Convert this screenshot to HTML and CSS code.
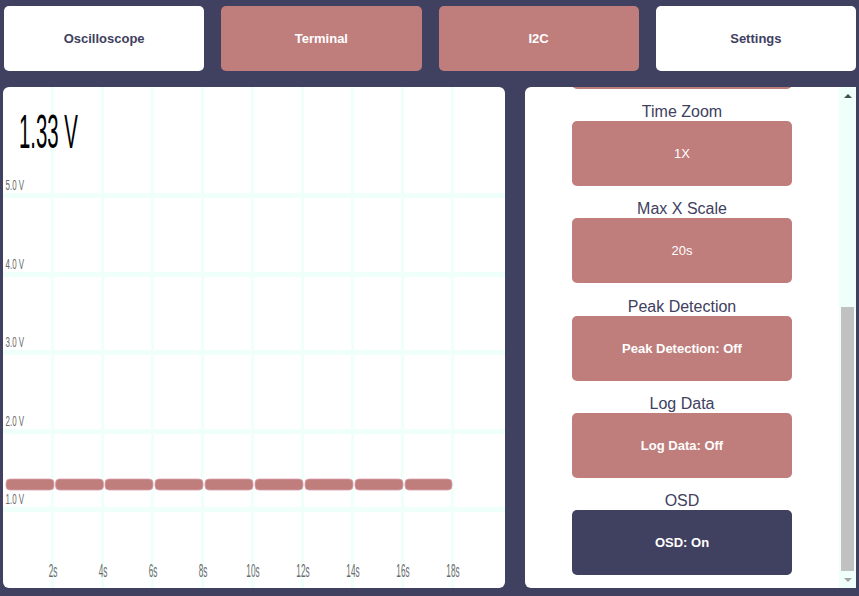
FILE: index.html
```html
<!DOCTYPE html>
<html>
<head>
<meta charset="utf-8">
<title>Oscilloscope</title>
<link rel="stylesheet" href="styles.css">
</head>
<body>
<div class="app">
  <nav class="nav">
    <button class="nav-btn light">Oscilloscope</button>
    <button class="nav-btn pink">Terminal</button>
    <button class="nav-btn pink">I2C</button>
    <button class="nav-btn light">Settings</button>
  </nav>
  <main class="main">
    <section class="chart">
      <svg class="chart-svg" width="502" height="501" viewBox="0 0 502 501">
        <g class="grid">
          <rect x="48" y="0" width="3" height="501"/>
          <rect x="98" y="0" width="3" height="501"/>
          <rect x="148" y="0" width="3" height="501"/>
          <rect x="198" y="0" width="3" height="501"/>
          <rect x="248" y="0" width="3" height="501"/>
          <rect x="298" y="0" width="3" height="501"/>
          <rect x="348" y="0" width="3" height="501"/>
          <rect x="398" y="0" width="3" height="501"/>
          <rect x="448" y="0" width="3" height="501"/>
          <rect x="0" y="106" width="502" height="5"/>
          <rect x="0" y="185" width="502" height="5"/>
          <rect x="0" y="263" width="502" height="5"/>
          <rect x="0" y="342" width="502" height="5"/>
          <rect x="0" y="420" width="502" height="5"/>
        </g>
        <g class="ylabels">
          <text transform="translate(2.5,103) scale(0.53,1)">5.0 V</text>
          <text transform="translate(2.5,181.5) scale(0.53,1)">4.0 V</text>
          <text transform="translate(2.5,260) scale(0.53,1)">3.0 V</text>
          <text transform="translate(2.5,338.5) scale(0.53,1)">2.0 V</text>
          <text transform="translate(2.5,417) scale(0.53,1)">1.0 V</text>
        </g>
        <g class="trace">
          <rect x="3" y="392" width="48" height="11" rx="4"/>
          <rect x="52.5" y="392" width="48" height="11" rx="4"/>
          <rect x="102" y="392" width="48" height="11" rx="4"/>
          <rect x="152" y="392" width="48" height="11" rx="4"/>
          <rect x="202" y="392" width="48" height="11" rx="4"/>
          <rect x="252" y="392" width="48" height="11" rx="4"/>
          <rect x="302" y="392" width="48" height="11" rx="4"/>
          <rect x="352" y="392" width="48" height="11" rx="4"/>
          <rect x="402" y="392" width="47" height="11" rx="4"/>
        </g>
        <g class="xlabels">
          <text transform="translate(50,490) scale(0.46,1)">2s</text>
          <text transform="translate(100,490) scale(0.46,1)">4s</text>
          <text transform="translate(150,490) scale(0.46,1)">6s</text>
          <text transform="translate(200,490) scale(0.46,1)">8s</text>
          <text transform="translate(250,490) scale(0.46,1)">10s</text>
          <text transform="translate(300,490) scale(0.46,1)">12s</text>
          <text transform="translate(350,490) scale(0.46,1)">14s</text>
          <text transform="translate(400,490) scale(0.46,1)">16s</text>
          <text transform="translate(450,490) scale(0.46,1)">18s</text>
        </g>
        <text class="reading" transform="translate(16,61) scale(0.425,1)">1.33 V</text>
      </svg>
    </section>
    <section class="settings">
      <div class="settings-content">
        <div class="setting">
          <div class="setting-btn pink"></div>
        </div>
        <div class="setting">
          <div class="setting-label">Time Zoom</div>
          <button class="setting-btn pink">1X</button>
        </div>
        <div class="setting">
          <div class="setting-label">Max X Scale</div>
          <button class="setting-btn pink">20s</button>
        </div>
        <div class="setting">
          <div class="setting-label">Peak Detection</div>
          <button class="setting-btn pink bold">Peak Detection: Off</button>
        </div>
        <div class="setting">
          <div class="setting-label">Log Data</div>
          <button class="setting-btn pink bold">Log Data: Off</button>
        </div>
        <div class="setting">
          <div class="setting-label">OSD</div>
          <button class="setting-btn dark bold">OSD: On</button>
        </div>
      </div>
      <div class="scrollbar">
        <div class="sb-btn"><span class="arrow-up"></span></div>
        <div class="sb-track"><div class="sb-thumb"></div></div>
        <div class="sb-btn"><span class="arrow-down"></span></div>
      </div>
    </section>
  </main>
</div>
</body>
</html>
```

FILE: styles.css
```css
* { box-sizing: border-box; }

html, body {
  margin: 0;
  padding: 0;
  background: #404060;
  font-family: "Liberation Sans", Arial, sans-serif;
}

.app {
  width: 859px;
  height: 596px;
  padding: 6px 3px 8px 3px;
  display: flex;
  flex-direction: column;
}

.nav {
  display: grid;
  grid-template-columns: repeat(4, 1fr);
  column-gap: 17px;
  padding-left: 1px;
  height: 65px;
}

.nav-btn {
  border: none;
  border-radius: 5px;
  font-family: "Liberation Sans", Arial, sans-serif;
  font-weight: bold;
  font-size: 13px;
  height: 65px;
  padding: 0;
  cursor: pointer;
}

.nav-btn.light { background: #ffffff; color: #404060; }
.nav-btn.pink { background: #bf7e7c; color: #ffffff; }

.main {
  margin-top: 16px;
  height: 501px;
  display: flex;
  column-gap: 20px;
}

.chart {
  width: 502px;
  height: 501px;
  background: #ffffff;
  border-radius: 6px;
  overflow: hidden;
}

.chart-svg { display: block; }

.grid rect { fill: #effffa; }

.trace rect {
  fill: #bf7e7c;
  stroke: #dba0ae;
  stroke-width: 0.8;
}

.ylabels text {
  font-family: "Liberation Sans", Arial, sans-serif;
  font-size: 15px;
  fill: #6a6a6a;
}

.xlabels text {
  font-family: "Liberation Sans", Arial, sans-serif;
  font-size: 18px;
  fill: #6a6a6e;
  text-anchor: middle;
}

.reading {
  font-family: "Liberation Sans", Arial, sans-serif;
  font-size: 48px;
  fill: #000000;
}

.settings {
  width: 331px;
  height: 501px;
  background: #ffffff;
  border-radius: 6px 0 0 6px;
  display: flex;
  overflow: hidden;
}

.settings-content {
  flex: 1;
  display: flex;
  flex-direction: column;
  justify-content: flex-end;
  align-items: center;
  padding-bottom: 13px;
  overflow: hidden;
  row-gap: 14.25px;
}

.setting {
  display: flex;
  flex-direction: column;
  align-items: center;
  flex-shrink: 0;
}

.setting-label {
  font-size: 16px;
  line-height: 18px;
  color: #404060;
  text-align: center;
}

.setting-btn {
  width: 220px;
  height: 65px;
  border: none;
  border-radius: 5px;
  font-family: "Liberation Sans", Arial, sans-serif;
  font-size: 13px;
  color: #ffffff;
  padding: 0;
  cursor: pointer;
}

.setting-btn.bold { font-weight: bold; }
.setting-btn.pink { background: #bf7e7c; }
.setting-btn.dark { background: #404060; }

.scrollbar {
  width: 17px;
  background: #effffa;
  display: flex;
  flex-direction: column;
}

.sb-btn {
  height: 17px;
  display: flex;
  align-items: center;
  justify-content: center;
}

.arrow-up {
  width: 0;
  height: 0;
  border-left: 4px solid transparent;
  border-right: 4px solid transparent;
  border-bottom: 4px solid #405050;
}

.arrow-down {
  width: 0;
  height: 0;
  border-left: 4px solid transparent;
  border-right: 4px solid transparent;
  border-top: 4px solid #a3a3a3;
}

.sb-track {
  flex: 1;
  display: flex;
  flex-direction: column;
  justify-content: flex-end;
  padding: 0 2px;
}

.sb-thumb {
  height: 264px;
  background: #c1c1c1;
}
```
